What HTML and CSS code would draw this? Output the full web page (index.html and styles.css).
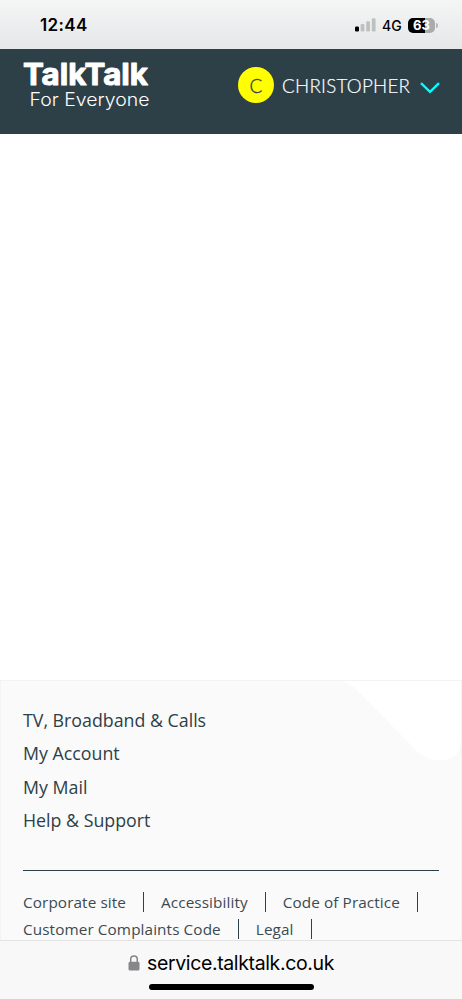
FILE: index.html
```html
<!DOCTYPE html>
<html lang="en">
<head>
<meta charset="utf-8">
<title>TalkTalk</title>
<link rel="stylesheet" href="styles.css">
</head>
<body>
<div class="status">
  <span class="clock">12:44</span>
  <div class="indicators">
    <svg class="signal" width="21" height="14" viewBox="0 0 21 14">
      <rect x="0" y="8.5" width="4" height="5" rx="1.2" fill="#000"/>
      <rect x="5.6" y="6" width="3.8" height="7.5" rx="1.2" fill="#bfc1c1"/>
      <rect x="11.2" y="3.2" width="3.8" height="10.3" rx="1.2" fill="#bfc1c1"/>
      <rect x="16.8" y="0.3" width="3.8" height="13.2" rx="1.2" fill="#bfc1c1"/>
    </svg>
    <span class="network">4G</span>
    <div class="battery"><span>63</span></div>
    <i class="battery-tip"></i>
  </div>
</div>
<header class="header">
  <svg class="logo" width="132" height="62" viewBox="0 0 132 62">
    <text class="logo-name" x="2" y="26.5" textLength="125" lengthAdjust="spacingAndGlyphs">TalkTalk</text>
    <text class="logo-tag" x="8.5" y="48" textLength="120" lengthAdjust="spacingAndGlyphs">For Everyone</text>
  </svg>
  <div class="user">
    <span class="avatar">C</span>
    <span class="user-name">CHRISTOPHER</span>
    <svg class="chevron" width="20" height="12" viewBox="0 0 20 12"><path d="M1 1.2 10 9.8 19 1.2" fill="none" stroke="#0ff" stroke-width="2.4"/></svg>
  </div>
</header>
<main class="content"></main>
<footer class="footer">
  <svg class="notch" width="128" height="81" viewBox="0 0 128 81"><path d="M0 0Q12 0 22 9L78 66Q90 80 104 80H110Q127 78 127 60H128V0Z" fill="#fff"/></svg>
  <ul class="main-links">
    <li>TV, Broadband &amp; Calls</li>
    <li>My Account</li>
    <li>My Mail</li>
    <li>Help &amp; Support</li>
  </ul>
  <hr class="rule">
  <div class="legal-links">
    <div class="row"><span>Corporate site</span><span>Accessibility</span><span>Code of Practice</span></div>
    <div class="row"><span>Customer Complaints Code</span><span>Legal</span></div>
  </div>
</footer>
<div class="browser-bar">
  <div class="address">
    <svg width="12" height="16" viewBox="0 0 12 16"><path d="M2.7 8V4.2a3.3 3.3 0 0 1 6.6 0V8" fill="none" stroke="#85858a" stroke-width="1.5"/><rect x=".5" y="6.8" width="11" height="8.7" rx="1.5" fill="#85858a"/></svg>
    <span>service.talktalk.co.uk</span>
  </div>
  <div class="home"></div>
</div>
</body>
</html>
```
FILE: styles.css
```css
* { box-sizing: border-box; }
body {
  margin: 0;
  width: 462px;
  height: 999px;
  overflow: hidden;
  display: flex;
  flex-direction: column;
  background: #fff;
  font-family: "Open Sans", "Noto Sans", sans-serif;
  color: #2d3f47;
}
.status {
  flex: 0 0 49px;
  display: flex;
  justify-content: space-between;
  align-items: center;
  padding: 1px 24px 0 40px;
  background: linear-gradient(#f4f5f5, #e6e7e8);
  color: #000;
  font-family: Inter, sans-serif;
}
.clock { font-size: 17px; font-weight: 600; letter-spacing: .35px; }
.indicators { display: flex; align-items: center; }
.network { margin-left: 6px; width: 26px; font-size: 14px; font-weight: 500; }
.battery {
  width: 27px;
  height: 15px;
  border-radius: 5px;
  background: linear-gradient(90deg, #000 63%, #aaacac 63%);
  color: #fff;
  font-size: 13px;
  font-weight: 700;
  line-height: 15px;
  text-align: center;
}
.battery-tip { width: 2px; height: 5px; margin-left: 1px; border-radius: 0 2px 2px 0; background: #b4b6b6; }
.header {
  flex: 0 0 85px;
  display: flex;
  justify-content: space-between;
  align-items: flex-start;
  padding: 9px 22px 0 21px;
  background: #2d4047;
  color: #fff;
}
.logo { fill: #fff; overflow: visible; }
.logo-name { font: 700 30px Inter, sans-serif; stroke: #fff; stroke-width: 1px; stroke-linejoin: round; }
.logo-tag { font: 300 18px Inter, sans-serif; }
.user { display: flex; align-items: center; height: 36px; margin-top: 9px; }
.avatar {
  width: 36px;
  height: 36px;
  border-radius: 50%;
  background: #ff0;
  color: #2d4047;
  font: 300 19px/38px Lato, sans-serif;
  -webkit-text-stroke: .3px #2d4047;
  text-align: center;
}
.user-name {
  width: 129px;
  margin-left: 8px;
  padding-top: 1px;
  font: 300 18.8px Lato, sans-serif;
  letter-spacing: .25px;
  -webkit-text-stroke: .2px #fff;
  white-space: nowrap;
}
.chevron { margin: 6px 0 0 9px; }
.content { flex: 0 0 546px; }
.footer {
  position: relative;
  flex: 0 0 260px;
  overflow: hidden;
  padding: 23px 22px 0;
  background: #fafafa;
  border: solid #f3f3f3;
  border-width: 1px 1px 0;
}
.notch { position: absolute; top: -1px; right: -1px; }
.main-links { margin: 0; padding: 0; list-style: none; font-size: 17.8px; line-height: 33.4px; }
.rule { height: 1px; margin: 32px 0 19px; border: 0; background: #2d3f47; }
.legal-links { font-size: 15.3px; letter-spacing: .1px; color: #3a4a52; }
.row { display: flex; height: 27px; padding-top: 2px; white-space: nowrap; }
.row span { height: 20px; margin-right: 17px; padding-right: 17px; border-right: 1px solid #2d3f47; line-height: 20px; }
.browser-bar {
  flex: 0 0 59px;
  display: flex;
  flex-direction: column;
  align-items: center;
  background: #f8f8f8;
  border-top: 1px solid #e4e4e4;
  color: #000;
}
.address { display: flex; align-items: center; gap: 7px; height: 43px; font: 400 19.5px Inter, sans-serif; letter-spacing: -.37px; }
.home { width: 165px; height: 6px; border-radius: 3px; background: #000; }
```
